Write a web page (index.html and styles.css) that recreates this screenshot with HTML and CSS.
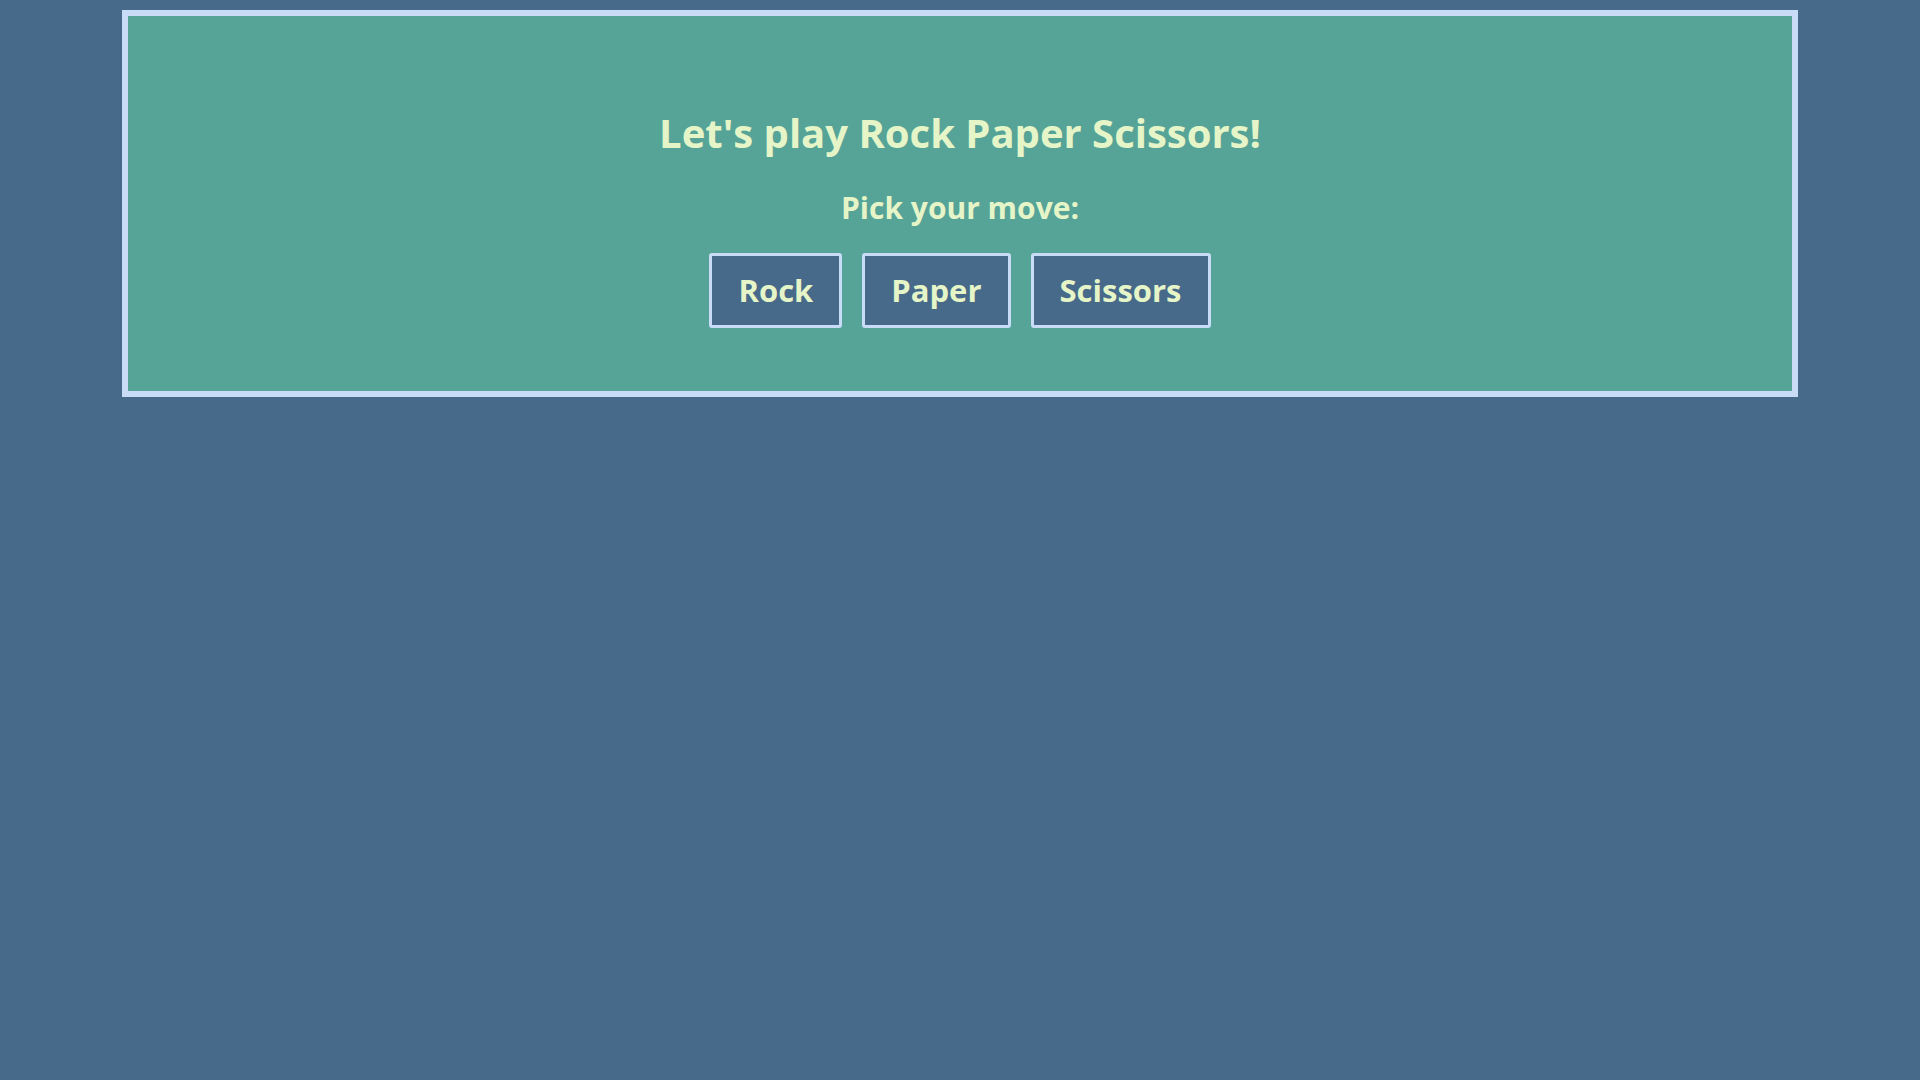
FILE: index.html
```html
<!DOCTYPE html>
<html lang="en">
<head>
<meta charset="utf-8">
<title>Rock Paper Scissors</title>
<link rel="stylesheet" href="styles.css">
</head>
<body>
<main class="game">
  <h1 class="title">Let's play Rock Paper Scissors!</h1>
  <p class="prompt">Pick your move:</p>
  <div class="moves">
    <button class="move">Rock</button>
    <button class="move">Paper</button>
    <button class="move">Scissors</button>
  </div>
</main>
</body>
</html>
```

FILE: styles.css
```css
html, body {
  margin: 0;
  padding: 0;
}
body {
  background: #47698a;
  font-family: "Open Sans", "Noto Sans", sans-serif;
  color: #e5f5c8;
  padding-top: 10px;
}
.game {
  box-sizing: border-box;
  width: 1676px;
  margin: 0 auto;
  background: #56a398;
  border: 6px solid #c8dcf8;
  padding: 89px 0 63px;
  display: flex;
  flex-direction: column;
  align-items: center;
}
.title {
  margin: 0 0 27px;
  font-size: 40px;
  font-weight: 700;
  line-height: normal;
}
.prompt {
  margin: 0 0 25px;
  font-size: 30px;
  font-weight: 700;
  line-height: normal;
}
.moves {
  display: flex;
  gap: 20px;
}
.move {
  font-family: "Open Sans", "Noto Sans", sans-serif;
  font-size: 31px;
  font-weight: 700;
  line-height: 43px;
  color: #e5f5c8;
  background: #47698a;
  border: 3px solid #c8dcf8;
  border-radius: 3px;
  padding: 13px 26px;
  margin: 0;
}
```
